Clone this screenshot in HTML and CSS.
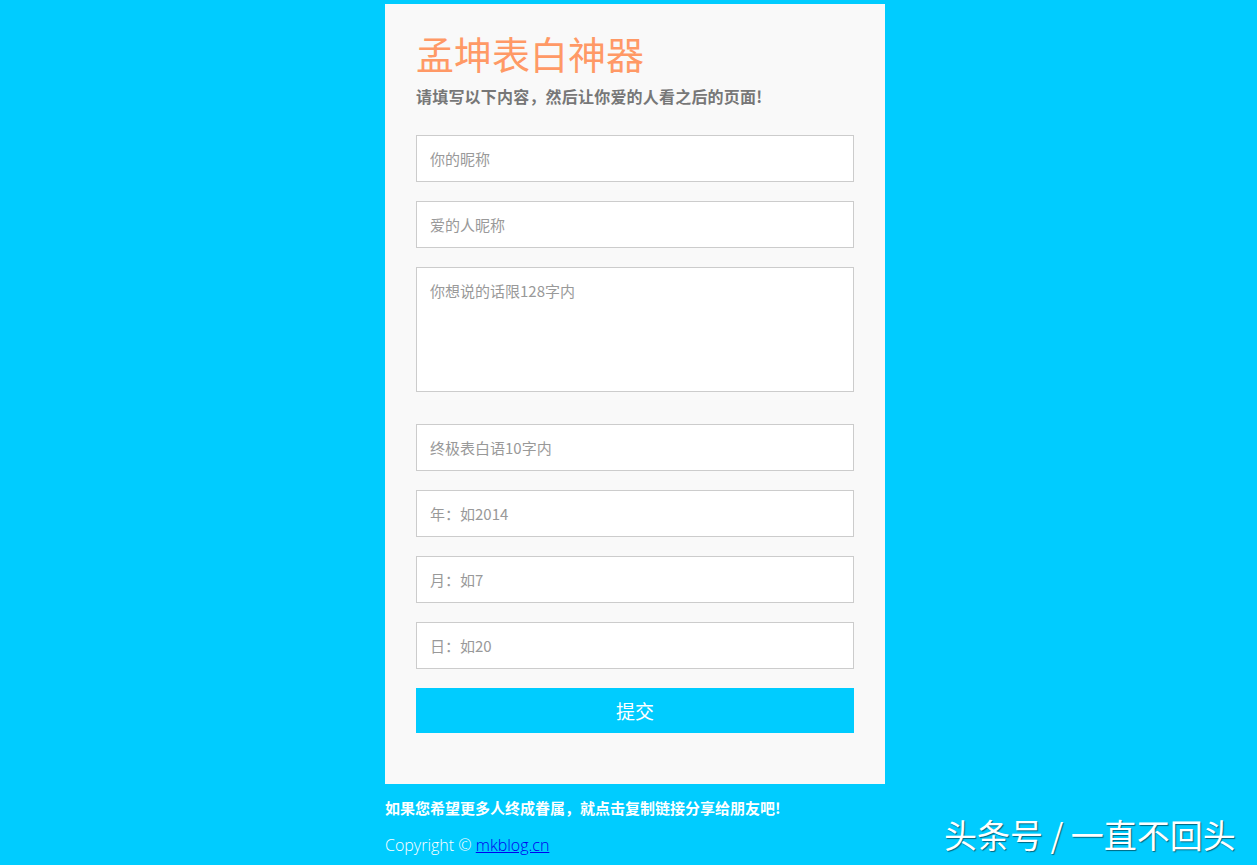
FILE: index.html
```html
<!DOCTYPE html>
<html lang="zh-CN">
<head>
<meta charset="utf-8">
<title>孟坤表白神器</title>
<link rel="stylesheet" href="styles.css">
</head>
<body>
<div class="wrap">
  <div class="card">
    <h1 class="title">孟坤表白神器</h1>
    <p class="subtitle">请填写以下内容，然后让你爱的人看之后的页面!</p>
    <form class="form">
      <input class="field" type="text" placeholder="你的昵称">
      <input class="field" type="text" placeholder="爱的人昵称">
      <textarea class="field area" placeholder="你想说的话限128字内"></textarea>
      <input class="field after-area" type="text" placeholder="终极表白语10字内">
      <input class="field" type="text" placeholder="年：如2014">
      <input class="field" type="text" placeholder="月：如7">
      <input class="field" type="text" placeholder="日：如20">
      <button class="submit" type="button">提交</button>
    </form>
  </div>
  <p class="share">如果您希望更多人终成眷属，就点击复制链接分享给朋友吧!</p>
  <p class="copy">Copyright © <a href="#">mkblog.cn</a></p>
</div>
<div class="watermark">头条号 / 一直不回头</div>
</body>
</html>
```

FILE: styles.css
```css
html, body {
  margin: 0;
  padding: 0;
}
body {
  background: #00ccff;
  font-family: "Noto Sans CJK SC", "Open Sans", sans-serif;
  min-height: 865px;
  position: relative;
  overflow: hidden;
}
.wrap {
  width: 500px;
  margin-left: calc(50% - 243.5px);
  padding-top: 4px;
}
.card {
  background: #f9f9f9;
  padding: 23px 31px 50px;
  height: 707px;
}
.title {
  margin: 0;
  font-size: 38px;
  line-height: 52px;
  font-weight: normal;
  color: #ff9966;
}
.subtitle {
  margin: 4px 0 0;
  font-size: 16px;
  line-height: 26px;
  font-weight: bold;
  color: #777;
  letter-spacing: 0.2px;
}
.form {
  margin-top: 26px;
  display: flex;
  flex-direction: column;
  gap: 19px;
}
.field {
  display: block;
  box-sizing: border-box;
  width: 438px;
  height: 47px;
  margin: 0;
  padding: 0 13px;
  border: 1px solid #ccc;
  background: #fff;
  font-family: "Noto Sans CJK SC", "Open Sans", sans-serif;
  font-size: 15px;
  color: #555;
  outline: none;
  border-radius: 0;
}
.field::placeholder {
  color: #999;
}
.area {
  height: 125px;
  padding-top: 12px;
  resize: none;
  line-height: 22px;
}
.after-area {
  margin-top: 13px;
}
.submit {
  display: block;
  width: 438px;
  height: 45px;
  border: 0;
  background: #00ccff;
  color: #fff;
  font-family: "Noto Sans CJK SC", sans-serif;
  font-size: 19px;
  padding: 0;
}
.share {
  margin: 14px 0 0;
  font-size: 15px;
  line-height: 20px;
  font-weight: bold;
  color: #fff;
}
.copy {
  margin: 16px 0 0;
  font-family: "Open Sans", "Noto Sans CJK SC", sans-serif;
  font-weight: 300;
  font-size: 16px;
  line-height: 22px;
  color: #fff;
}
.copy a {
  color: #0000ee;
}
.watermark {
  position: absolute;
  left: 944px;
  top: 812px;
  font-family: "Noto Sans CJK SC", sans-serif;
  font-size: 33px;
  line-height: 44px;
  color: #fff;
  text-shadow: 1px 1px 1px rgba(0, 0, 0, 0.5);
  white-space: nowrap;
}
```
